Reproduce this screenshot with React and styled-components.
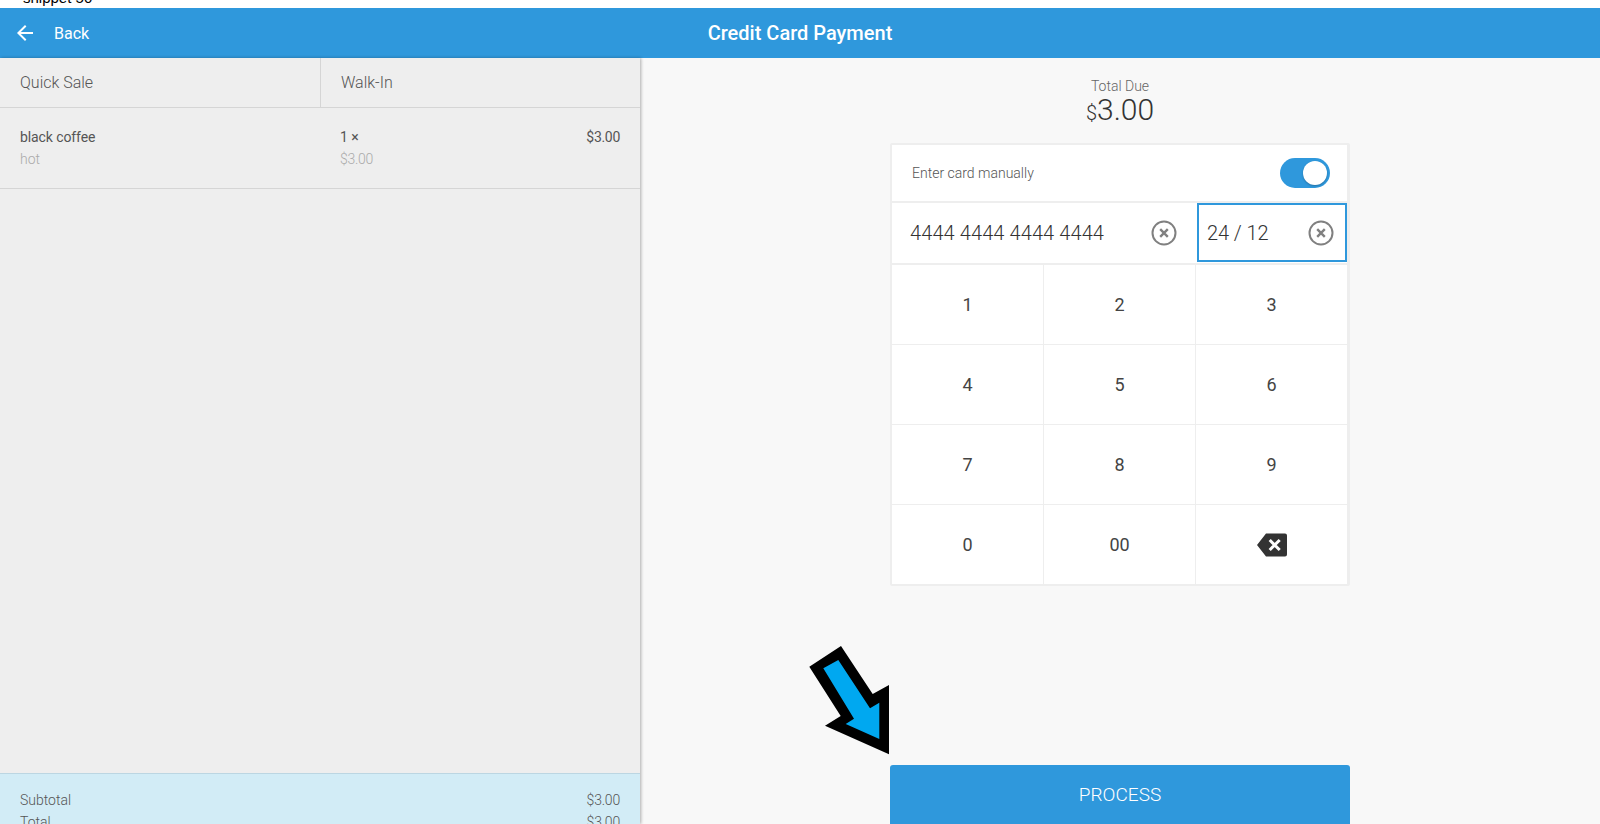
import React from 'react'
import styled, { createGlobalStyle } from 'styled-components'

const GlobalStyle = createGlobalStyle`
  html, body {
    margin: 0;
    height: 100%;
    overflow: hidden;
    background: #fff;
  }
  body {
    font-family: Roboto, "Liberation Sans", sans-serif;
    font-weight: 300;
    color: #333;
  }
`

const Page = styled.div`
  height: 824px;
  display: flex;
  flex-direction: column;
  overflow: hidden;
`

const ClippedNote = styled.div`
  height: 8px;
  flex: none;
  overflow: hidden;
  padding-left: 23px;
  font-family: "Liberation Sans", sans-serif;
  font-size: 15px;
  font-weight: 400;
  line-height: 0;
  color: #000;
`

const NoteText = styled.div`
  margin-top: -2px;
`

const Header = styled.header`
  height: 50px;
  flex: none;
  display: flex;
  align-items: center;
  position: relative;
  background: #2f98dc;
  color: #fff;
`

const BackLink = styled.div`
  display: flex;
  align-items: center;
  gap: 17px;
  padding-left: 13px;
  font-size: 16px;
  font-weight: 400;
`

const Title = styled.h1`
  position: absolute;
  left: 0;
  right: 0;
  margin: 0;
  text-align: center;
  font-size: 20px;
  font-weight: 500;
`

const Body = styled.div`
  flex: 1;
  min-height: 0;
  display: flex;
`

const Sidebar = styled.aside`
  width: 640px;
  flex: none;
  display: flex;
  flex-direction: column;
  background: #eee;
  box-shadow: 1px 0 3px rgba(0, 0, 0, 0.3);
  z-index: 1;
`

const SideTabs = styled.div`
  height: 49px;
  flex: none;
  display: flex;
  border-bottom: 1px solid #d5d5d5;
`

const SideTab = styled.div`
  width: 320px;
  box-sizing: border-box;
  display: flex;
  align-items: center;
  padding-left: 20px;
  font-size: 16px;
  color: #555;
  border-left: ${(p) => (p.$last ? '1px solid #d5d5d5' : 'none')};
`

const LineItem = styled.div`
  height: 80px;
  flex: none;
  display: grid;
  grid-template-columns: 320px 1fr auto;
  grid-template-rows: 22px 22px;
  align-content: center;
  align-items: center;
  padding: 0 20px;
  border-bottom: 1px solid #d5d5d5;
  font-size: 14px;
`

const ItemText = styled.span`
  font-weight: 400;
  color: #555;
  letter-spacing: ${(p) => (p.$money ? '-0.3px' : '-0.1px')};
`

const ItemMuted = styled.span`
  color: #aaa;
  letter-spacing: ${(p) => (p.$money ? '-0.3px' : '0')};
`

const Spacer = styled.div`
  flex: 1;
`

const Summary = styled.div`
  height: 51px;
  box-sizing: border-box;
  flex: none;
  overflow: hidden;
  padding: 15px 20px 0;
  background: #d2ecf6;
  border-top: 1px solid #bcd6e2;
  font-size: 14px;
  color: #555;
`

const SummaryRow = styled.div`
  height: 22px;
  display: flex;
  align-items: center;
  justify-content: space-between;
`

const SummaryValue = styled.span`
  letter-spacing: -0.2px;
`

const Main = styled.main`
  flex: 1;
  min-width: 0;
  display: flex;
  flex-direction: column;
  align-items: center;
  background: #f8f8f8;
`

const Checkout = styled.div`
  width: 460px;
  height: 100%;
  display: flex;
  flex-direction: column;
  align-items: center;
`

const DueLabel = styled.div`
  margin-top: 20px;
  height: 16px;
  line-height: 16px;
  font-size: 14px;
  color: #666;
`

const DueAmount = styled.div`
  height: 34px;
  line-height: 32px;
  font-size: 30px;
  font-weight: 300;
  color: #333;
`

const Currency = styled.span`
  font-size: 20px;
  font-weight: 300;
`

const Panel = styled.div`
  width: 460px;
  box-sizing: border-box;
  margin-top: 15px;
  background: #fff;
  border: 2px solid #eee;
  border-right-width: 3px;
  border-radius: 2px;
`

const ToggleRow = styled.div`
  height: 56px;
  display: flex;
  align-items: center;
  justify-content: space-between;
  padding: 0 17px 0 20px;
  font-size: 14px;
  color: #555;
  border-bottom: 2px solid #eee;
`

const Track = styled.div`
  width: 50px;
  height: 30px;
  display: flex;
  align-items: center;
  justify-content: flex-end;
  padding: 0 3px;
  box-sizing: border-box;
  border-radius: 15px;
  background: #2f98dc;
`

const Knob = styled.div`
  width: 24px;
  height: 24px;
  border-radius: 50%;
  background: #fff;
  box-shadow: 0 1px 2px rgba(0, 0, 0, 0.25);
`

const Fields = styled.div`
  display: grid;
  grid-template-columns: 304px 1fr;
  height: 60px;
  border-bottom: 2px solid #eee;
`

const Field = styled.div`
  display: flex;
  align-items: center;
  justify-content: space-between;
  padding: ${(p) => (p.$focused ? '0 11px 0 8px' : '0 19px 0 18px')};
  font-size: 20px;
  letter-spacing: ${(p) => (p.$focused ? '-0.1px' : '0.1px')};
  color: #333;
  border: ${(p) => (p.$focused ? '2px solid #2f98dc' : 'none')};
  margin: ${(p) => (p.$focused ? '0 0 1px 1px' : '0')};
`

const Keypad = styled.div`
  display: grid;
  grid-template-columns: 152px 152px 1fr;
  grid-template-rows: 80px 80px 80px 79px;
`

const Key = styled.div`
  display: flex;
  align-items: center;
  justify-content: center;
  font-size: 18px;
  font-weight: 400;
  color: #444;
  border-right: ${(p) => (p.$col === 2 ? 'none' : '1px solid #eee')};
  border-bottom: ${(p) => (p.$row === 3 ? 'none' : '1px solid #eee')};
`

const ArrowSlot = styled.div`
  flex: 1;
  align-self: stretch;
  position: relative;
`

const Pointer = styled.svg`
  position: absolute;
  left: -90px;
  bottom: 5px;
`

const ProcessButton = styled.button`
  width: 460px;
  height: 59px;
  flex: none;
  border: none;
  border-radius: 3px 3px 0 0;
  background: #2f98dc;
  color: #fff;
  font-family: inherit;
  font-size: 19px;
  font-weight: 300;
`

const BackArrow = () => (
  <svg width="24" height="24" viewBox="0 0 24 24" fill="#fff">
    <path d="M20 11H7.83l5.59-5.59L12 4l-8 8 8 8 1.41-1.41L7.83 13H20v-2z" />
  </svg>
)

const ClearIcon = () => (
  <svg width="26" height="26" viewBox="0 0 26 26" fill="none" stroke="#808080">
    <circle cx="13" cy="13" r="11.5" strokeWidth="2" />
    <path d="M9.2 9.2l7.6 7.6M16.8 9.2l-7.6 7.6" strokeWidth="2.4" />
  </svg>
)

const BackspaceIcon = () => (
  <svg width="30" height="24" viewBox="0 0 30 24">
    <path d="M9 .6h19a2 2 0 0 1 2 2v18.8a2 2 0 0 1-2 2H9L0 12z" fill="#333" />
    <path d="M12.7 7l10 10M22.7 7l-10 10" stroke="#fff" strokeWidth="3" fill="none" />
  </svg>
)

const keys = ['1', '2', '3', '4', '5', '6', '7', '8', '9', '0', '00', 'back']

export default function App() {
  return (
    <Page>
      <GlobalStyle />
      <ClippedNote>
        <NoteText>snippet 50</NoteText>
      </ClippedNote>
      <Header>
        <BackLink>
          <BackArrow />
          Back
        </BackLink>
        <Title>Credit Card Payment</Title>
      </Header>
      <Body>
        <Sidebar>
          <SideTabs>
            <SideTab>Quick Sale</SideTab>
            <SideTab $last>Walk-In</SideTab>
          </SideTabs>
          <LineItem>
            <ItemText>black coffee</ItemText>
            <ItemText>1 ×</ItemText>
            <ItemText $money>$3.00</ItemText>
            <ItemMuted>hot</ItemMuted>
            <ItemMuted $money>$3.00</ItemMuted>
          </LineItem>
          <Spacer />
          <Summary>
            <SummaryRow>
              <span>Subtotal</span>
              <SummaryValue>$3.00</SummaryValue>
            </SummaryRow>
            <SummaryRow>
              <span>Total</span>
              <SummaryValue>$3.00</SummaryValue>
            </SummaryRow>
          </Summary>
        </Sidebar>
        <Main>
          <Checkout>
            <DueLabel>Total Due</DueLabel>
            <DueAmount>
              <Currency>$</Currency>3.00
            </DueAmount>
            <Panel>
              <ToggleRow>
                Enter card manually
                <Track>
                  <Knob />
                </Track>
              </ToggleRow>
              <Fields>
                <Field>
                  4444 4444 4444 4444
                  <ClearIcon />
                </Field>
                <Field $focused>
                  24 / 12
                  <ClearIcon />
                </Field>
              </Fields>
              <Keypad>
                {keys.map((k, i) => (
                  <Key key={k} $col={i % 3} $row={Math.floor(i / 3)}>
                    {k === 'back' ? <BackspaceIcon /> : k}
                  </Key>
                ))}
              </Keypad>
            </Panel>
            <ArrowSlot>
              <Pointer width="100" height="120" viewBox="0 0 100 120">
                <polygon
                  points="9.3,26.7 41,6 72.7,54 89,45 89,114.3 25,85.7 40.7,76"
                  fill="#000"
                />
                <polygon
                  points="23.3,28.3 38.3,20 70,68.3 79.3,62.7 79.3,99 45.7,84 54,78.7"
                  fill="#00a8f0"
                />
              </Pointer>
            </ArrowSlot>
            <ProcessButton>PROCESS</ProcessButton>
          </Checkout>
        </Main>
      </Body>
    </Page>
  )
}
